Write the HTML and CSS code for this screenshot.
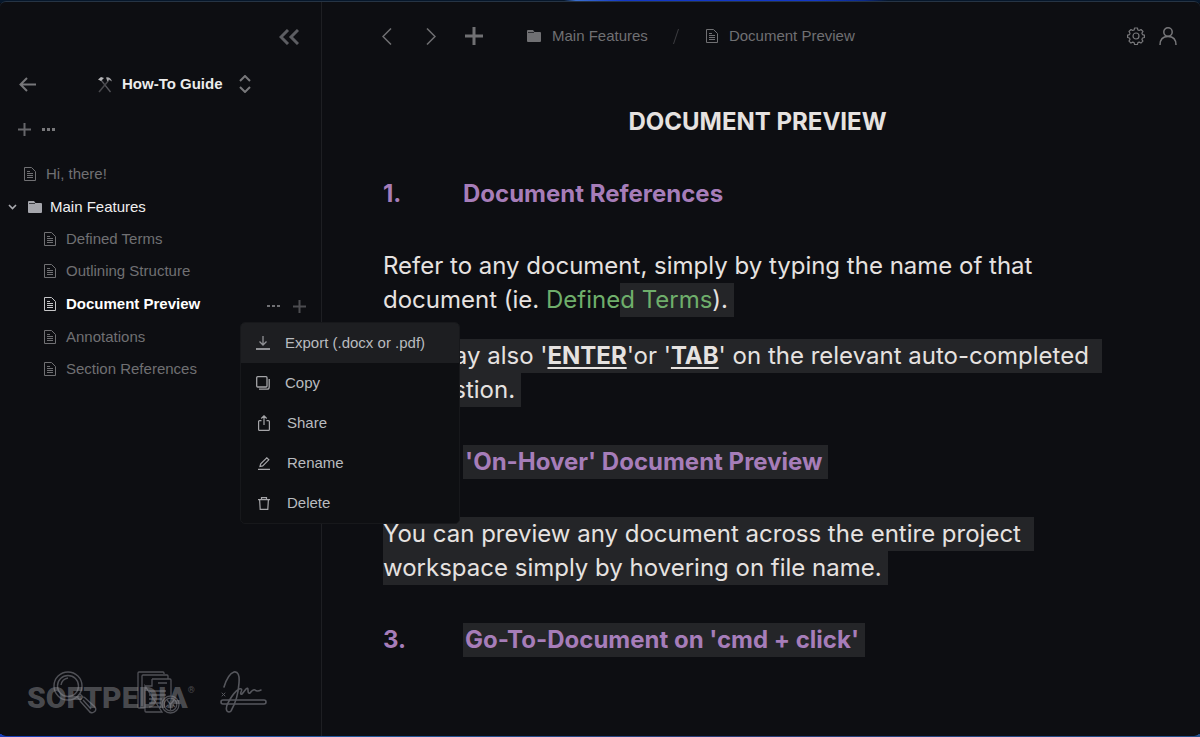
FILE: index.html
```html
<!DOCTYPE html>
<html lang="en">
<head>
<meta charset="utf-8">
<meta name="viewport" content="width=device-width, initial-scale=1">
<title>Document Preview</title>
<link rel="stylesheet" href="styles.css">
</head>
<body>
<svg class="sprite" aria-hidden="true">
  <symbol id="doc" viewBox="0 0 12 14"><path d="M.5.5h7l4 4v9H.5z" fill="none" stroke="currentColor" stroke-linejoin="round"/><path d="M3 4.500h3M3 6.500h6M3 8.500h6M3 10.500h6" stroke="currentColor"/></symbol>
  <symbol id="folder" viewBox="0 0 14 12"><path d="M0 1q0-1 1-1h5l1.500 2H13q1 0 1 1v8q0 1-1 1H1q-1 0-1-1z" fill="currentColor"/><path d="M1 2.500h6" stroke="#0d0e12" stroke-width=".7"/></symbol>
</svg>
<div class="window">
  <div class="shell">
    <aside class="sidebar">
      <div class="collapse-row">
        <button class="icon-btn" aria-label="Collapse sidebar"><svg width="20" height="16" viewBox="0 0 20 16" fill="none" stroke="#5c5d62" stroke-width="3"><path d="M9 1 2 8l7 7M19 1l-7 7 7 7"/></svg></button>
      </div>
      <div class="project-row">
        <button class="icon-btn back" aria-label="Back"><svg width="17" height="15" viewBox="0 0 17 15" fill="none" stroke="#77777a" stroke-width="2"><path d="M17 7.500H2M8 1 1.500 7.500 8 14"/></svg></button>
        <button class="project">
          <svg width="16" height="17" viewBox="0 0 16 17" fill="none"><path d="M4 4l9.500 12" stroke="#55555a" stroke-width="1.300"/><path d="M12 4 2 16" stroke="#48484c" stroke-width="1.500"/><path d="M1 3.500 4 1l3 1-3 3z" fill="#b5b5b8"/><path d="M9 1.500q4-1 6 4l-3-2-1.500 2z" fill="#a5a5a8"/></svg>
          <span>How-To Guide</span>
          <svg class="updown" width="12" height="18" viewBox="0 0 12 18" fill="none" stroke="#77777a" stroke-width="2"><path d="M1 6l5-5 5 5M1 12l5 5 5-5"/></svg>
        </button>
      </div>
      <div class="tools-row">
        <button class="icon-btn" aria-label="Add"><svg width="13" height="13" viewBox="0 0 13 13" stroke="#66666a" stroke-width="2"><path d="M6.500 0v13M0 6.500h13"/></svg></button>
        <button class="icon-btn" aria-label="More"><svg width="13" height="3" viewBox="0 0 13 3" fill="#77777a"><path d="M0 0h3v3H0zM5 0h3v3H5zM10 0h3v3h-3z"/></svg></button>
      </div>
      <nav aria-label="Documents">
        <ul class="tree">
          <li class="item top"><a href="#"><svg class="doc-icon"><use href="#doc"/></svg>Hi, there!</a></li>
          <li>
            <div class="item folder"><a href="#"><svg width="9" height="6" viewBox="0 0 9 6" fill="none" stroke="#aaabb0" stroke-width="1.600"><path d="M1 1l3.500 3.500L8 1"/></svg><svg class="folder-icon"><use href="#folder"/></svg>Main Features</a></div>
            <ul class="children">
              <li class="item"><a href="#"><svg class="doc-icon"><use href="#doc"/></svg>Defined Terms</a></li>
              <li class="item"><a href="#"><svg class="doc-icon"><use href="#doc"/></svg>Outlining Structure</a></li>
              <li class="item current">
                <a href="#"><svg class="doc-icon"><use href="#doc"/></svg>Document Preview</a>
                <span class="row-actions">
                  <button class="icon-btn" aria-label="Options"><svg width="13" height="3" viewBox="0 0 13 3" fill="#707074"><path d="M0 0h3v2H0zM5 0h3v2H5zM10 0h3v2h-3z"/></svg></button>
                  <button class="icon-btn" aria-label="Add page"><svg width="13" height="13" viewBox="0 0 13 13" stroke="#4c4c50" stroke-width="2"><path d="M6.500 0v13M0 6.500h13"/></svg></button>
                </span>
                <div class="menu">
                  <button class="wide active"><svg width="14" height="14" viewBox="0 0 14 14" fill="none" stroke="#909195" stroke-width="1.300"><path d="M7 0v9M3.500 5.500 7 9l3.500-3.500"/><path d="M0 13h14" stroke-width="2"/></svg>Export (.docx or .pdf)</button>
                  <button class="wide"><svg width="14" height="14" viewBox="0 0 14 14" fill="none" stroke="#a5a5a8" stroke-width="1.300"><rect x=".7" y=".7" width="10.300" height="10.300" rx="1"/><path d="M13.200 3v8q0 2.200-2.200 2.200H3"/></svg>Copy</button>
                  <button><svg width="12" height="16" viewBox="0 0 12 16" fill="none" stroke="#a5a5a8" stroke-width="1.200"><path d="M3.500 5.600H1.600q-1 0-1 1v7.800q0 1 1 1h8.800q1 0 1-1V6.600q0-1-1-1H8.500M6 10V1M3.300 3.500 6 .8l2.700 2.700"/></svg>Share</button>
                  <button><svg width="12" height="13" viewBox="0 0 12 13" fill="none" stroke="#a5a5a8" stroke-width="1.200"><path d="M0 12.400h12M2 9.500l.7-2.700L8.800.8l2 2L4.700 8.900z"/></svg>Rename</button>
                  <button><svg width="12" height="13" viewBox="0 0 12 13" fill="none" stroke="#a5a5a8" stroke-width="1.200"><path d="M0 2.600h12M3.500 2.500V.6h5v1.900M1.600 2.600l.6 9.800h7.600l.6-9.800"/></svg>Delete</button>
                </div>
              </li>
              <li class="item"><a href="#"><svg class="doc-icon"><use href="#doc"/></svg>Annotations</a></li>
              <li class="item"><a href="#"><svg class="doc-icon"><use href="#doc"/></svg>Section References</a></li>
            </ul>
          </li>
        </ul>
      </nav>
      <div class="side-footer">
        <button class="icon-btn" aria-label="Search"><svg width="44" height="43" viewBox="0 0 44 43" fill="none" stroke="#505157" stroke-width="1.400"><circle cx="15" cy="15" r="14"/><circle cx="15" cy="15" r="10.500"/><path d="M8 14q1-6 7-7M24 26l3-3 3 3-3 3zM27 30l9 10q2 3 5 1t1-5L31 26M30 29l8 9"/></svg></button>
        <button class="icon-btn" aria-label="Templates"><svg width="43" height="43" viewBox="0 0 43 43" fill="none" stroke="#505157" stroke-width="1.300"><path d="M8 37H2q-1 0-1-1V2q0-1 1-1h24q1 0 1 1v1M5 35V5q0-1 1-1h24q1 0 1 1v3M15 8h18q1 0 1 1v17M25 41H9q-1 0-1-1V15zM15 8v7H8M21 12h9M12 20h17M12 24h17M12 28h13M12 32h12M12 36h12"/><circle cx="33.500" cy="33.500" r="8.500"/><circle cx="33.500" cy="33.500" r="6.300"/><path d="M30 29l3.500 4.500L37 29M33.500 33v6M29 36l2-2M38 36l-2-2"/></svg></button>
        <button class="icon-btn" aria-label="Sign"><svg width="47" height="43" viewBox="0 0 47 43" fill="none" stroke="#56575d" stroke-width="1.600" stroke-linecap="round"><path d="M4 16Q8 3 14 1q6-1 5 11-1 16-8 28-2 2-4 0-2-3 2-10 5-9 10-12 4-1 2 3-1 3 1 2l4-5q2-2 2 1 0 4 2 3 3-4 5-3 2 2 6 0"/><rect x="1" y="29" width="45" height="4" rx="2"/><path d="M2 22l3 3m0-3-3 3" stroke-width="1"/></svg></button>
        <div class="watermark">SOFTPEDIA<sup>®</sup></div>
      </div>
    </aside>
    <main class="main">
      <header class="topbar">
        <button class="icon-btn" aria-label="Previous"><svg width="10" height="17" viewBox="0 0 10 17" fill="none" stroke="#707073" stroke-width="1.500"><path d="M9 .5 1 8.500l8 8"/></svg></button>
        <button class="icon-btn next" aria-label="Next"><svg width="10" height="17" viewBox="0 0 10 17" fill="none" stroke="#707073" stroke-width="1.500"><path d="M1 .5l8 8-8 8"/></svg></button>
        <button class="icon-btn plus" aria-label="New document"><svg width="18" height="18" viewBox="0 0 18 18" stroke="#707073" stroke-width="3"><path d="M9 0v18M0 9h18"/></svg></button>
        <nav class="crumbs" aria-label="Breadcrumb">
          <a href="#"><svg class="folder-icon"><use href="#folder"/></svg>Main Features</a>
          <svg class="slash" width="6" height="15" viewBox="0 0 6 15" stroke="#3c3c40"><path d="M5.500 0 .5 15"/></svg>
          <a href="#"><svg class="doc-icon"><use href="#doc"/></svg>Document Preview</a>
        </nav>
        <div class="account">
          <button class="icon-btn" aria-label="Settings"><svg width="18" height="18" viewBox="0 0 18 18" fill="none" stroke="#77777a" stroke-width="1.200" stroke-linejoin="round"><circle cx="9" cy="9" r="3"/><path d="M7.600 1h2.800l.5 2 1.300.5 1.800-1 2 2-1.100 1.700.6 1.400 1.900.5v2.400l-1.900.5-.6 1.400 1 1.700-2 2-1.700-1-1.300.5-.5 1.900H7.600l-.5-1.900-1.400-.5-1.700 1-2-2 1-1.700-.5-1.400-1.900-.5V8.100l1.900-.5.500-1.400-1-1.700 2-2 1.700 1 1.400-.5z"/></svg></button>
          <button class="icon-btn" aria-label="Account"><svg width="18" height="18" viewBox="0 0 18 18" fill="none" stroke="#77777a" stroke-width="1.500"><circle cx="9" cy="5" r="4.200"/><path d="M1 18q0-8.500 8-8.500t8 8.500"/></svg></button>
        </div>
      </header>
      <article class="document">
        <h1>DOCUMENT PREVIEW</h1>
        <h2><span>1.</span><span>Document References</span></h2>
        <p>Refer to any document, simply by typing the name of that<br>document (ie. <a href="#">Define</a><mark><a href="#">d Terms</a>).</mark></p>
        <p class="follow"><mark class="wrap">You may also '<strong>ENTER</strong>'or '<strong>TAB</strong>' on the relevant auto-completed</mark><br><mark>suggestion.</mark></p>
        <h2><span>2.</span><mark>'On-Hover' Document Preview</mark></h2>
        <p><mark class="wrap">You can preview any document across the entire project</mark><br><mark>workspace simply by hovering on file name.</mark></p>
        <h2><span>3.</span><mark>Go-To-Document on 'cmd + click'</mark></h2>
      </article>
    </main>
  </div>
</div>
</body>
</html>
```
FILE: styles.css
```css
* { box-sizing: border-box; }
body {
  margin: 0;
  background: #0d0e12;
  color: #707073;
  font: 15px/20px "Liberation Sans", Arial, sans-serif;
}
a { color: inherit; text-decoration: none; }
ul { margin: 0; padding: 0; list-style: none; }
button { font: inherit; color: inherit; background: none; border: 0; padding: 0; cursor: pointer; }
svg { display: block; flex: none; }
.sprite { position: absolute; width: 0; height: 0; }
.icon-btn { display: flex; align-items: center; justify-content: center; }

.window {
  min-height: 100vh;
  display: flex;
  flex-direction: column;
  padding: 1px 0;
  background:
    linear-gradient(90deg, #06172b 0 47%, #3b6fd0 48%, #1238c8 52% 68%, #0a2a8c 72%, #06172b 74%) top / 100% 3px no-repeat,
    linear-gradient(90deg, #1b3fb8, #245a9c 30%, #2c3d78 60%, #24508c) bottom / 100% 3px no-repeat,
    #0d0e12;
}
.shell {
  flex: 1;
  display: grid;
  grid-template-columns: 322px 1fr;
  background: #0d0e12;
  border-top: 1px solid #263444;
  border-radius: 6px;
}

.sidebar {
  display: flex;
  flex-direction: column;
  padding: 15px 0 22px;
  border-right: 1px solid #1e1f23;
}
.collapse-row { display: flex; align-items: center; justify-content: flex-end; height: 40px; padding-right: 22px; }
.project-row { display: grid; grid-template-columns: 97px 1fr; align-items: center; height: 54px; }
.back { justify-self: start; margin-left: 19px; }
.project { display: flex; align-items: center; gap: 9px; color: #ececec; font-weight: 700; }
.updown { margin-left: 7px; }
.tools-row { display: flex; align-items: center; gap: 11px; height: 37px; padding-left: 18px; }

.tree { padding-top: 9px; }
.item { display: flex; align-items: center; height: 32px; }
.item a { display: flex; align-items: center; gap: 10px; }
.top { height: 33px; padding-left: 24px; }
.folder { height: 33px; padding-left: 8px; color: #f0f0f0; }
.folder a { gap: 8px; }
.folder .folder-icon { margin-left: 3px; color: #a5a6ac; }
.children .item { padding-left: 44px; }
.doc-icon { width: 12px; height: 14px; }
.folder-icon { width: 14px; height: 12px; }
.children .current { position: relative; height: 34px; color: #fff; font-weight: 700; }
.current .doc-icon { color: #c4c4c6; }
.row-actions { display: flex; align-items: center; gap: 13px; margin-left: auto; padding: 5px 15px 0 0; }

.menu {
  position: absolute;
  z-index: 2;
  top: 35px;
  left: 240px;
  width: 220px;
  overflow: hidden;
  border: 1px solid #17181b;
  border-radius: 5px;
  background: #0e0f12;
  color: #b9bbbf;
  font-weight: 400;
}
.menu button { display: flex; align-items: center; gap: 17px; width: 100%; height: 40px; padding-left: 17px; }
.menu .wide { gap: 15px; padding-left: 15px; }
.menu .active { background: #1d1e21; }

.side-footer { position: relative; display: flex; align-items: center; gap: 40px; margin-top: auto; padding-left: 53px; }
.watermark {
  position: absolute;
  top: 9px;
  left: 27px;
  color: rgba(150, 150, 155, .45);
  font: 900 30px/36px Roboto, sans-serif;
  pointer-events: none;
}
.watermark sup { font-size: 9px; line-height: 9px; vertical-align: 15px; }

.main { display: flex; flex-direction: column; }
.topbar { display: flex; align-items: center; height: 68px; padding: 0 23px 0 60px; }
.next { margin-left: 34px; }
.plus { margin-left: 29px; }
.crumbs { display: flex; align-items: center; margin-left: 44px; }
.crumbs a { display: flex; align-items: center; gap: 11px; }
.crumbs .doc-icon { height: 14px; }
.slash { margin: 0 27px 0 25px; }
.account { display: flex; gap: 14px; margin-left: auto; }

.document {
  padding: 35px 68px 40px 61px;
  color: #e6e2e0;
  font: 24px/34px Inter, sans-serif;
}
.document h1, .document h2, .document p { margin: 0 0 38px; }
.document h1, .document h2 { font-size: 24px; font-weight: 700; line-height: 34px; }
.document h1 { font-size: 24px; text-align: center; }
.document h2 { display: grid; grid-template-columns: 80px 1fr; justify-items: start; color: #a67db9; }
.document p { white-space: nowrap; }
.document p:has(+ .follow) { margin-bottom: 22px; }
.document a { color: #6fae6b; }
.document mark { display: inline-block; padding-right: 6px; background: #242528; color: inherit; vertical-align: top; }
.document h2 mark { padding-left: 2px; }
.document .wrap { padding-right: 13px; }
.document strong { text-decoration: underline; text-underline-offset: 3px; }
```
